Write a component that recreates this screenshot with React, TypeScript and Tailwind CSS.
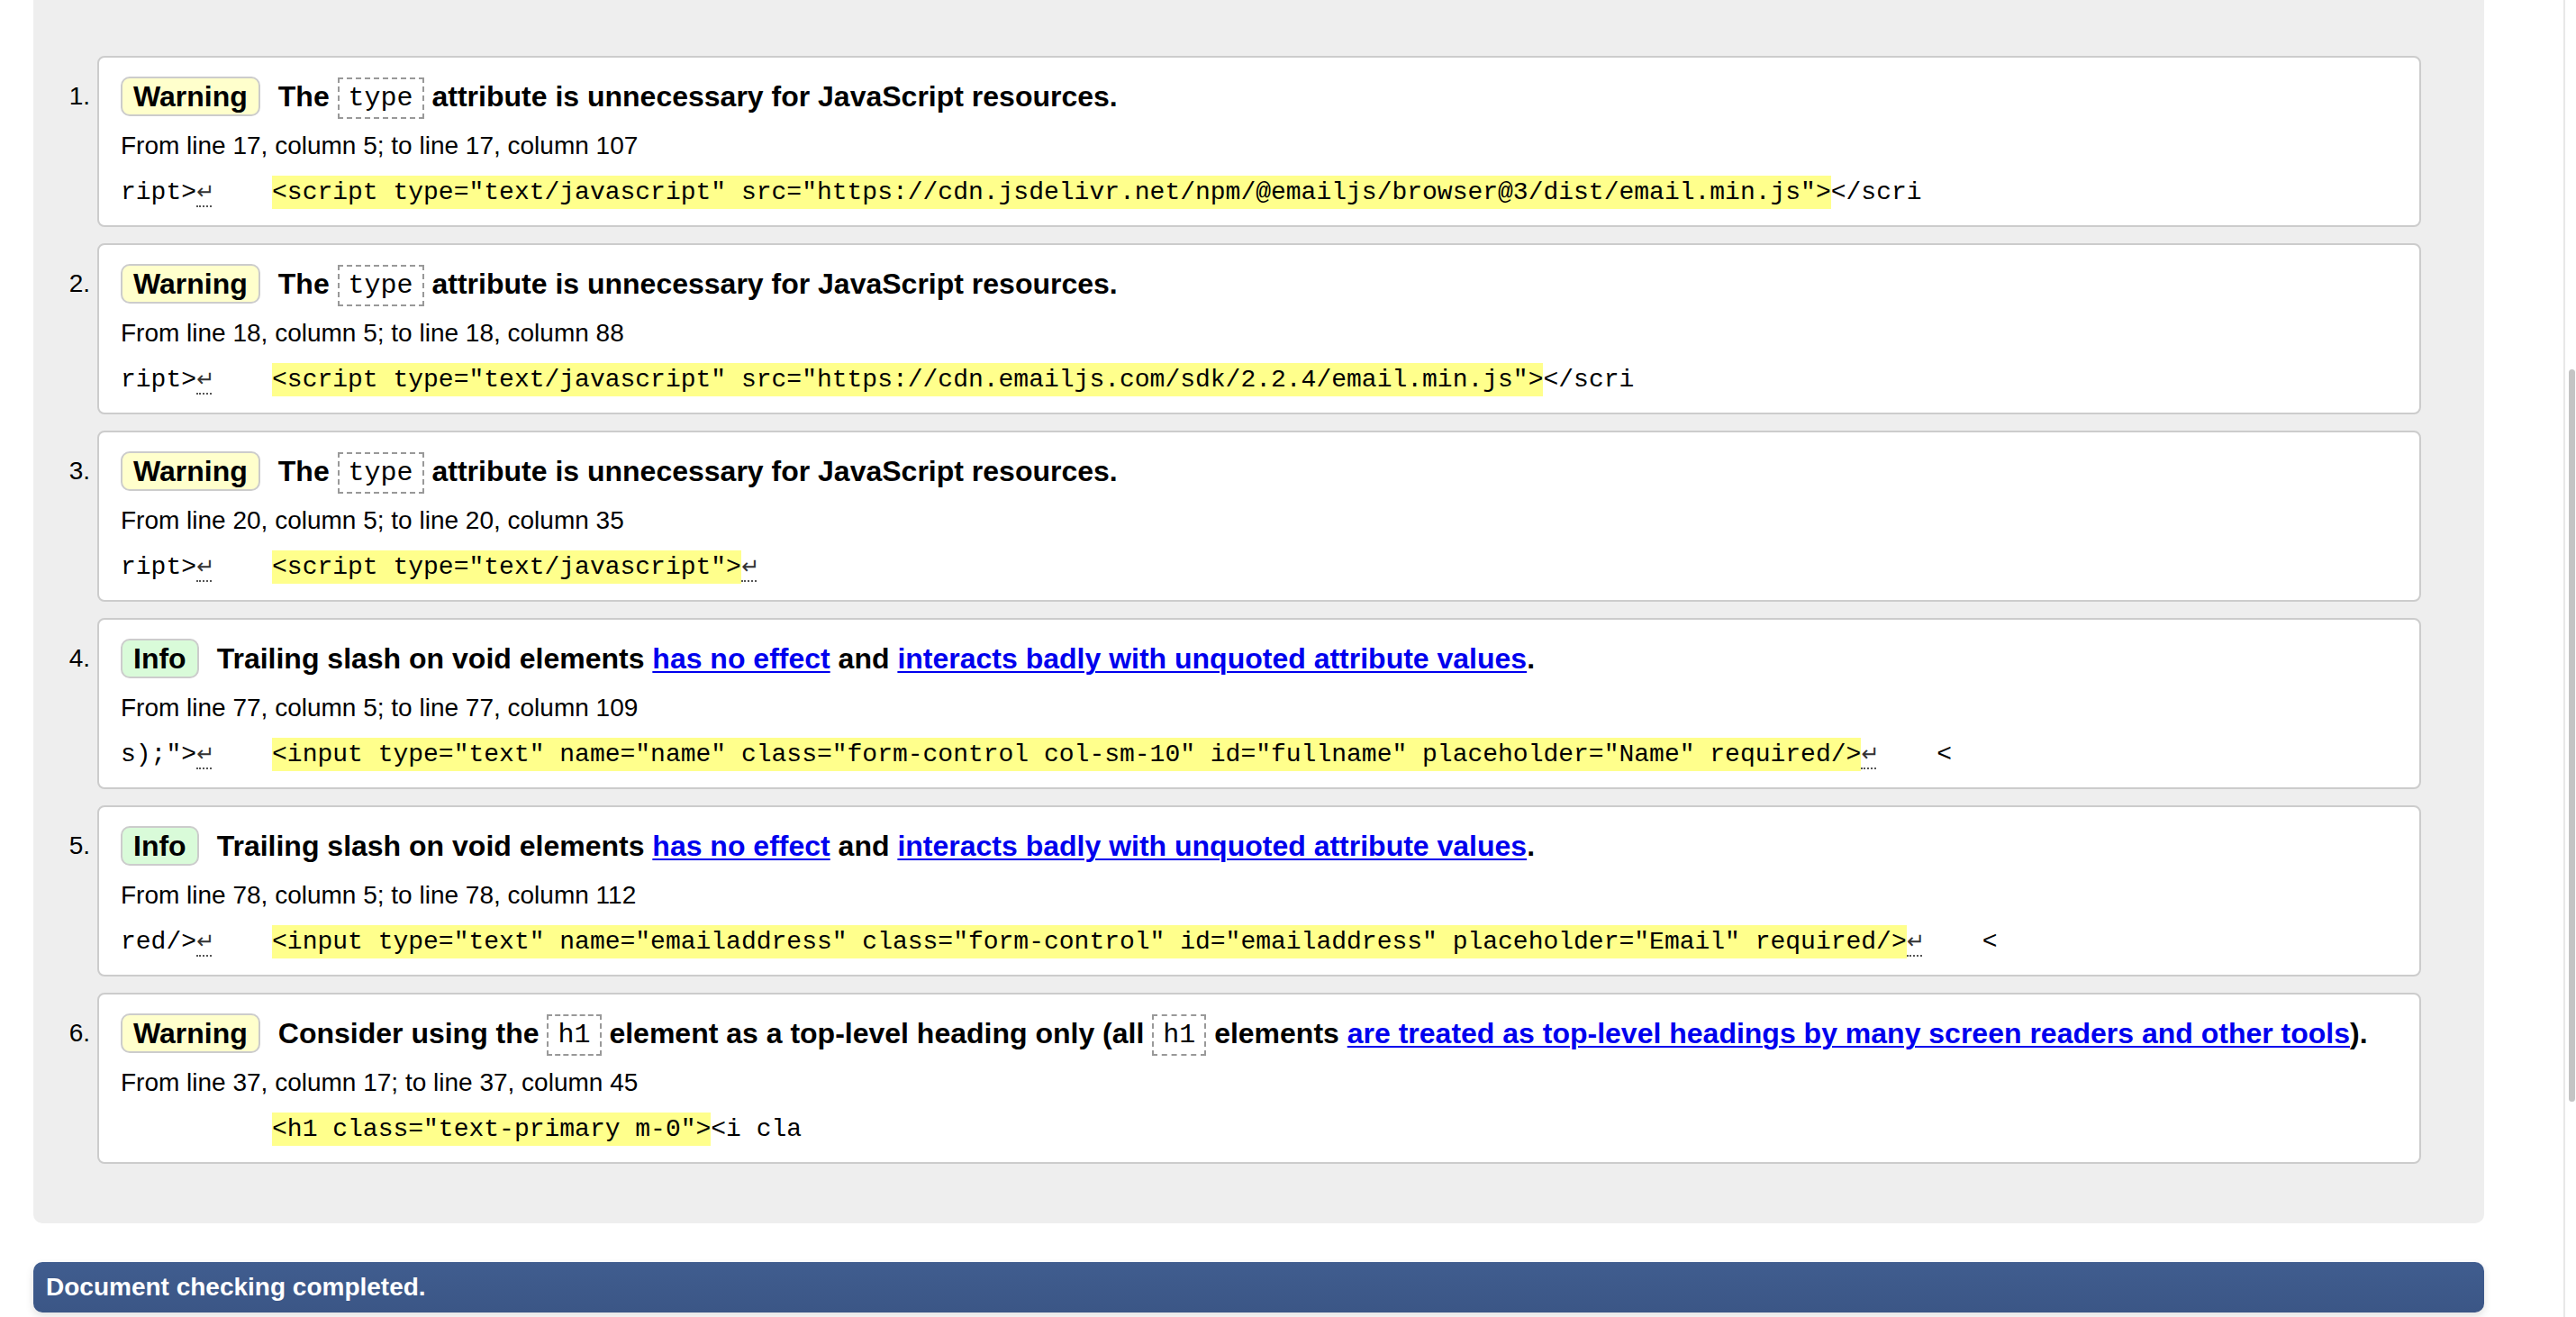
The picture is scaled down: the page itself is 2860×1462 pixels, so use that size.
import React from "react";

type Seg = string | { lf: true } | { hl: string };

const LF = { lf: true } as const;

function Lf() {
  return (
    <span className="inline-block w-[1ch] text-center border-b-2 border-dotted border-[#555] leading-[28px] align-baseline">
      <span className="text-[24px] text-[#333]" style={{ fontFamily: '"DejaVu Sans", sans-serif' }}>
        ↵
      </span>
    </span>
  );
}

function Code({ children }: { children: React.ReactNode }) {
  return (
    <span
      className="inline-block align-middle border-2 border-dashed border-[#999] px-[10px] text-[30px] leading-[42px] font-normal"
      style={{ fontFamily: '"Liberation Mono", monospace' }}
    >
      {children}
    </span>
  );
}

function A({ children }: { children: React.ReactNode }) {
  return <span className="text-[#0000ee] underline underline-offset-[3px] decoration-2">{children}</span>;
}

const typeHeading = (
  <>
    The <Code>type</Code> attribute is unnecessary for JavaScript resources.
  </>
);

const slashHeading = (
  <>
    Trailing slash on void elements <A>has no effect</A> and <A>interacts badly with unquoted attribute values</A>.
  </>
);

const h1Heading = (
  <>
    Consider using the <Code>h1</Code> element as a top-level heading only (all <Code>h1</Code> elements{" "}
    <A>are treated as top-level headings by many screen readers and other tools</A>).
  </>
);

const items: { kind: "Warning" | "Info"; heading: React.ReactNode; from: string; code: Seg[] }[] = [
  {
    kind: "Warning",
    heading: typeHeading,
    from: "From line 17, column 5; to line 17, column 107",
    code: [
      "ript>",
      LF,
      "    ",
      { hl: '<script type="text/javascript" src="https://cdn.jsdelivr.net/npm/@emailjs/browser@3/dist/email.min.js">' },
      "</scri",
    ],
  },
  {
    kind: "Warning",
    heading: typeHeading,
    from: "From line 18, column 5; to line 18, column 88",
    code: [
      "ript>",
      LF,
      "    ",
      { hl: '<script type="text/javascript" src="https://cdn.emailjs.com/sdk/2.2.4/email.min.js">' },
      "</scri",
    ],
  },
  {
    kind: "Warning",
    heading: typeHeading,
    from: "From line 20, column 5; to line 20, column 35",
    code: ["ript>", LF, "    ", { hl: '<script type="text/javascript">' }, LF],
  },
  {
    kind: "Info",
    heading: slashHeading,
    from: "From line 77, column 5; to line 77, column 109",
    code: [
      's);">',
      LF,
      "    ",
      { hl: '<input type="text" name="name" class="form-control col-sm-10" id="fullname" placeholder="Name" required/>' },
      LF,
      "    <",
    ],
  },
  {
    kind: "Info",
    heading: slashHeading,
    from: "From line 78, column 5; to line 78, column 112",
    code: [
      "red/>",
      LF,
      "    ",
      {
        hl: '<input type="text" name="emailaddress" class="form-control" id="emailaddress" placeholder="Email" required/>',
      },
      LF,
      "    <",
    ],
  },
  {
    kind: "Warning",
    heading: h1Heading,
    from: "From line 37, column 17; to line 37, column 45",
    code: ["          ", { hl: '<h1 class="text-primary m-0">' }, "<i cla"],
  },
];

function Badge({ kind }: { kind: "Warning" | "Info" }) {
  return (
    <span
      className={
        "inline-block shrink-0 border-2 border-[#cccccc] rounded-[10px] px-[12px] text-[32px] leading-[40px] font-bold text-black " +
        (kind === "Warning" ? "bg-[#ffffcc]" : "bg-[#d9fbd9]")
      }
    >
      {kind}
    </span>
  );
}

function CodeLine({ segs }: { segs: Seg[] }) {
  return (
    <div
      className="whitespace-pre text-[28px] leading-[40px] text-black mt-[14px]"
      style={{ fontFamily: '"Liberation Mono", monospace' }}
    >
      {segs.map((s, i) => {
        if (typeof s === "string") return <span key={i}>{s}</span>;
        if ("lf" in s) return <Lf key={i} />;
        return (
          <span key={i} className="bg-[#ffff8c] py-[3px]">
            {s.hl}
          </span>
        );
      })}
    </div>
  );
}

export default function App() {
  return (
    <div
      className="w-[2860px] h-[1462px] overflow-hidden bg-white flex text-black"
      style={{ fontFamily: '"Liberation Sans", Arial, sans-serif' }}
    >
      <div className="flex-1 pl-[37px] pr-[88px] flex flex-col">
        <div className="bg-[#eeeeee] rounded-b-[10px] pt-[62px] pb-[66px] pr-[70px]">
          <div className="flex flex-col gap-[18px]">
            {items.map((it, idx) => (
              <div key={idx} className="flex">
                <div className="w-[71px] shrink-0 pr-[8px] pt-[20px] text-right text-[28px] leading-[50px]">
                  {idx + 1}.
                </div>
                <div className="flex-1 bg-white border-2 border-[#cccccc] rounded-[8px] pl-[24px] pr-[20px] pt-[18px] pb-[16px]">
                  <div className="flex items-center h-[50px] whitespace-nowrap">
                    <Badge kind={it.kind} />
                    <span className="ml-[20px] text-[32px] leading-[50px] font-bold">{it.heading}</span>
                  </div>
                  <div className="mt-[12px] text-[28px] leading-[36px]">{it.from}</div>
                  <CodeLine segs={it.code} />
                </div>
              </div>
            ))}
          </div>
        </div>
        <div className="mt-[43px] h-[56px] shrink-0 rounded-[10px] bg-linear-to-b from-[#405d8f] to-[#3b5686] pl-[14px] flex items-center text-white font-bold text-[28px] shadow-[0_4px_10px_rgba(0,0,0,0.12)]">
          Document checking completed.
        </div>
      </div>
      <div className="w-[14px] shrink-0 border-l-2 border-[#e8e8e8] flex flex-col items-end pt-[410px] pr-[1px]">
        <div className="w-[7px] h-[813px] rounded-full bg-[#c4c4c4]" />
      </div>
    </div>
  );
}
